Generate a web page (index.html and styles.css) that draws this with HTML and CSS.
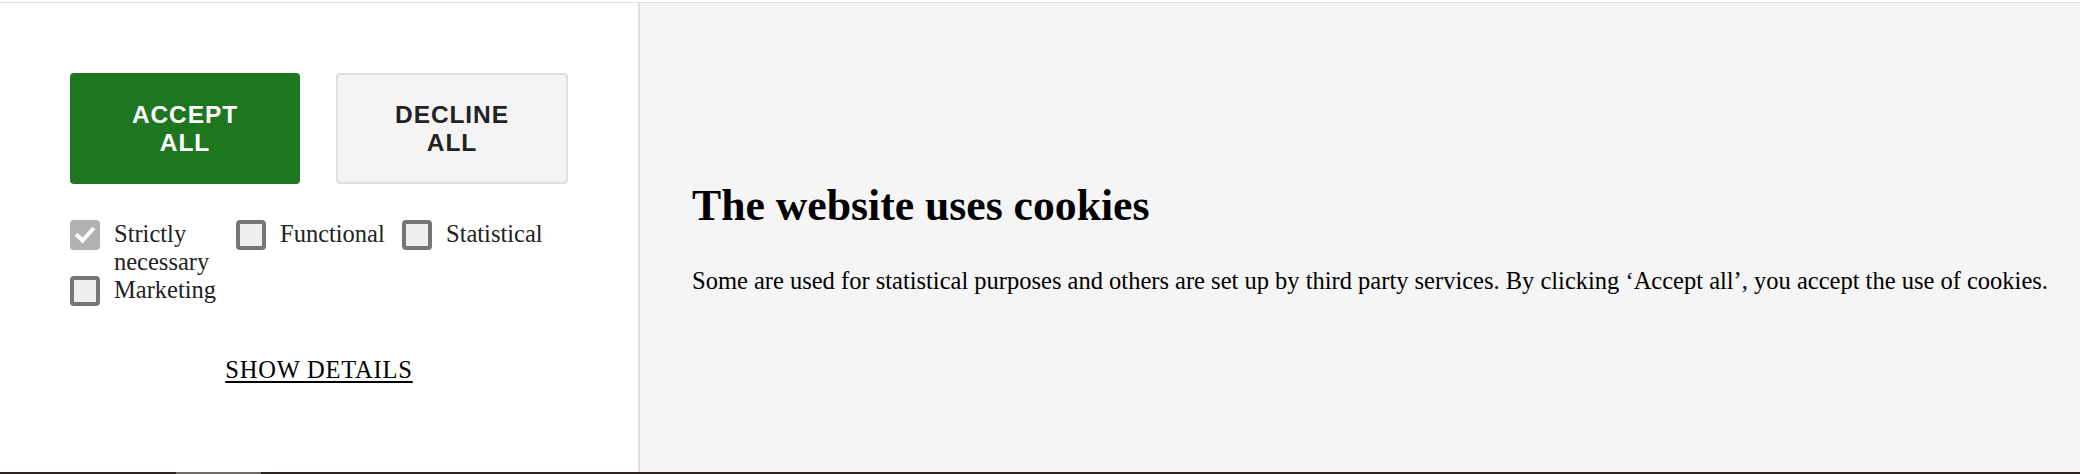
FILE: index.html
```html
<!DOCTYPE html>
<html lang="en">
<head>
<meta charset="utf-8">
<title>Cookie banner</title>
<link rel="stylesheet" href="styles.css">
</head>
<body>
<div class="banner">
  <div class="actions">
    <div class="buttons">
      <button class="btn btn-accept">Accept all</button>
      <button class="btn btn-decline">Decline all</button>
    </div>
    <div class="options">
      <label class="opt">
        <span class="box box-checked"><svg viewBox="0 0 30 30" width="30" height="30"><path d="M7.5 15.5 L12.5 20.5 L22.5 9.5" fill="none" stroke="#fff" stroke-width="4" stroke-linecap="square"/></svg></span>
        <span class="opt-text">Strictly necessary</span>
      </label>
      <label class="opt">
        <span class="box"></span>
        <span class="opt-text">Functional</span>
      </label>
      <label class="opt">
        <span class="box"></span>
        <span class="opt-text">Statistical</span>
      </label>
      <label class="opt">
        <span class="box"></span>
        <span class="opt-text">Marketing</span>
      </label>
    </div>
    <div class="details-row"><a class="details" href="#">Show details</a></div>
  </div>
  <div class="info">
    <div class="info-inner">
      <h2 class="info-title">The website uses cookies</h2>
      <p class="info-text">Some are used for statistical purposes and others are set up by third party services. By clicking ‘Accept all’, you accept the use of cookies.</p>
    </div>
  </div>
</div>
<div class="page-edge"><span class="page-edge-tab"></span></div>
</body>
</html>
```
FILE: styles.css
```css
html, body {
  margin: 0;
  padding: 0;
}
body {
  background: #ffffff;
  font-family: "Liberation Serif", "Times New Roman", serif;
  font-size: 24.5px;
  color: #000;
  padding-top: 2px;
}
.banner {
  display: flex;
  height: 469px;
  border-top: 1px solid #e2e2e2;
  background: #ffffff;
}
.actions {
  width: 640px;
  box-sizing: border-box;
  padding: 70px 72px 0 70px;
  border-right: 2px solid #e0e0e0;
  background: #ffffff;
  flex: none;
}
.buttons {
  display: grid;
  grid-template-columns: 230px 232px;
  column-gap: 36px;
}
.btn {
  height: 111px;
  box-sizing: border-box;
  padding: 0 50px;
  border-radius: 4px;
  font-family: "Liberation Sans", Arial, sans-serif;
  font-weight: bold;
  font-size: 24.5px;
  letter-spacing: 0.9px;
  text-transform: uppercase;
  line-height: normal;
  cursor: pointer;
}
.btn-accept {
  background: #1e761f;
  color: #ffffff;
  border: none;
}
.btn-decline {
  background: #f4f4f4;
  color: #222222;
  border: 2px solid #e0e0e0;
}
.options {
  display: grid;
  grid-template-columns: repeat(3, 166px);
  margin-top: 36px;
}
.opt {
  display: flex;
  align-items: flex-start;
  gap: 14px;
  color: #222;
}
.box {
  flex: none;
  width: 30px;
  height: 30px;
  box-sizing: border-box;
  border: 4px solid #767676;
  border-radius: 4px;
  background: #efefef;
  display: block;
}
.box-checked {
  border: none;
  background: #b1b1b1;
}
.box-checked svg {
  display: block;
}
.opt-text {
  line-height: normal;
}
.details-row {
  margin-top: 50px;
  margin-right: -2px;
  text-align: center;
}
.details {
  color: #000;
  text-transform: uppercase;
  letter-spacing: 0.8px;
  text-decoration: underline;
  text-decoration-thickness: 2px;
  text-underline-offset: 3px;
}
.info {
  flex: 1;
  display: flex;
  align-items: center;
  padding-left: 52px;
  background: #f5f5f5;
}
.info-title {
  margin: 0 0 37px 0;
  font-size: 43.7px;
  font-weight: bold;
  line-height: normal;
}
.info-text {
  margin: 0;
  line-height: normal;
}
.page-edge {
  height: 2px;
  background: #2b2421;
  position: relative;
}
.page-edge-tab {
  position: absolute;
  left: 176px;
  width: 85px;
  top: 0;
  height: 2px;
  background: #6d6a68;
}
```
